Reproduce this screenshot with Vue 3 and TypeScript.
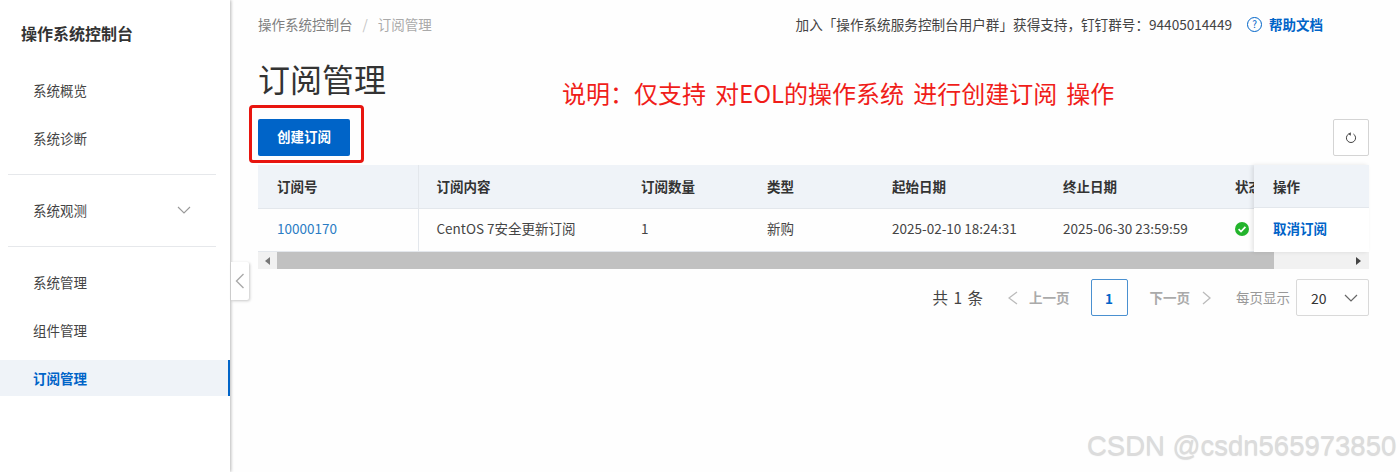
<template>
  <div class="page">
    <aside class="sidebar">
      <h1 class="console-title">操作系统控制台</h1>
      <template v-for="(group, i) in navGroups" :key="i">
        <div v-if="i > 0" class="nav-divider"></div>
        <nav class="nav-group">
          <a
            v-for="item in group"
            :key="item.label"
            class="nav-item"
            :class="{ active: item.label === activeNav }"
          >
            <span>{{ item.label }}</span>
            <svg v-if="item.expandable" class="nav-arrow" width="14" height="8" viewBox="0 0 14 8">
              <path d="M1 1l6 6 6-6" fill="none" stroke="#999" stroke-width="1.1" />
            </svg>
          </a>
        </nav>
      </template>
      <div class="collapse-handle">
        <svg width="10" height="16" viewBox="0 0 10 16">
          <path d="M8.5 1L1.5 8l7 7" fill="none" stroke="#aaa" stroke-width="1.4" />
        </svg>
      </div>
    </aside>

    <main class="content">
      <header class="topbar">
        <div class="breadcrumb">
          <span>操作系统控制台</span>
          <span class="sep">/</span>
          <span class="current">订阅管理</span>
        </div>
        <div class="notice">
          <span>加入「操作系统服务控制台用户群」获得支持，钉钉群号：94405014449</span>
          <a class="help">
            <i class="help-icon">?</i>
            <b>帮助文档</b>
          </a>
        </div>
      </header>

      <h2 class="page-title">订阅管理</h2>
      <div class="annotation">说明：仅支持 对EOL的操作系统 进行创建订阅 操作</div>

      <div class="toolbar">
        <div class="create-wrap">
          <button class="btn-primary">创建订阅</button>
          <div class="red-box"></div>
        </div>
        <button class="btn-refresh" aria-label="刷新">
          <svg width="12" height="12" viewBox="0 0 12 12">
            <path d="M3.6 2A4.6 4.6 0 1 0 8.4 2" fill="none" stroke="#444" stroke-width="1" />
            <path d="M5.8 0.2L3 2l2.8 1.8z" fill="#444" />
          </svg>
        </button>
      </div>

      <div class="table-wrap">
        <div class="table-scroll">
          <table class="grid">
            <colgroup>
              <col v-for="w in colWidths" :key="w.key" :style="{ width: w.width + 'px' }" />
            </colgroup>
            <thead>
              <tr>
                <th v-for="c in columns" :key="c">{{ c }}</th>
              </tr>
            </thead>
            <tbody>
              <tr v-for="row in rows" :key="row.id">
                <td><a class="link">{{ row.id }}</a></td>
                <td>{{ row.content }}</td>
                <td>{{ row.count }}</td>
                <td>{{ row.type }}</td>
                <td>{{ row.start }}</td>
                <td>{{ row.end }}</td>
                <td>
                  <span class="status">
                    <svg width="14" height="14" viewBox="0 0 14 14">
                      <circle cx="7" cy="7" r="7" fill="#23b42c" />
                      <path d="M3.6 7.2l2.4 2.3 4.4-4.6" fill="none" stroke="#fff" stroke-width="1.7" />
                    </svg>
                  </span>
                </td>
              </tr>
            </tbody>
          </table>
        </div>
        <div class="fixed-col">
          <div class="fixed-head">操作</div>
          <div class="fixed-cell"><a class="action">取消订阅</a></div>
        </div>
      </div>

      <div class="scrollbar">
        <span class="scroll-btn"><i class="tri-left"></i></span>
        <span class="scroll-thumb"></span>
        <span class="scroll-btn end"><i class="tri-right"></i></span>
      </div>

      <div class="pagination">
        <span class="total">共 1 条</span>
        <span class="pager prev">
          <svg width="10" height="14" viewBox="0 0 10 14">
            <path d="M9 1L1 7l8 6" fill="none" stroke="#bbb" stroke-width="1.3" />
          </svg>
          <b>上一页</b>
        </span>
        <span class="page-num">1</span>
        <span class="pager next">
          <b>下一页</b>
          <svg width="10" height="14" viewBox="0 0 10 14">
            <path d="M1 1l7 6-7 6" fill="none" stroke="#bbb" stroke-width="1.3" />
          </svg>
        </span>
        <span class="per-page">每页显示</span>
        <span class="select">
          <span>20</span>
          <svg width="14" height="8" viewBox="0 0 14 8">
            <path d="M1 1l6 6 6-6" fill="none" stroke="#666" stroke-width="1.2" />
          </svg>
        </span>
      </div>

      <div class="watermark">CSDN @csdn565973850</div>
    </main>
  </div>
</template>

<script setup lang="ts">
interface NavItem {
  label: string;
  expandable?: boolean;
}

const activeNav = '订阅管理';

const navGroups: NavItem[][] = [
  [{ label: '系统概览' }, { label: '系统诊断' }],
  [{ label: '系统观测', expandable: true }],
  [{ label: '系统管理' }, { label: '组件管理' }, { label: '订阅管理' }],
];

const columns = ['订阅号', '订阅内容', '订阅数量', '类型', '起始日期', '终止日期', '状态'];

const colWidths = [160, 205, 126, 125, 171, 172, 37].map((width, key) => ({ key, width }));

const rows = [
  {
    id: '10000170',
    content: 'CentOS 7安全更新订阅',
    count: 1,
    type: '新购',
    start: '2025-02-10 18:24:31',
    end: '2025-06-30 23:59:59',
  },
];
</script>

<style>
html,
body {
  margin: 0;
  background: #fff;
}
</style>

<style scoped>
.page {
  position: relative;
  display: flex;
  width: 1400px;
  height: 472px;
  overflow: hidden;
  background: #fefefe;
  color: #333;
  font-family: "Noto Sans CJK SC", "Liberation Sans", sans-serif;
  font-size: 13.5px;
}

.sidebar {
  position: relative;
  flex: none;
  width: 230px;
  box-sizing: border-box;
  background: #fff;
  box-shadow: 1px 0 3px rgba(0, 0, 0, 0.28);
}

.console-title {
  margin: 0;
  height: 72px;
  padding: 21px 0 0 21px;
  box-sizing: border-box;
  font-size: 16px;
  line-height: 24px;
  font-weight: 700;
}

.nav-group {
  display: flex;
  flex-direction: column;
  gap: 12px;
}

.nav-divider {
  height: 1px;
  margin: 18px 14px 17px 8px;
  background: #e6e8eb;
}

.nav-item {
  display: flex;
  align-items: center;
  justify-content: space-between;
  height: 36px;
  padding: 0 39px 0 33px;
  color: #444;
}

.nav-item.active {
  background: #eff3f8;
  color: #0064c8;
  font-weight: 700;
  box-shadow: inset -2px 0 0 #0064c8;
}

.collapse-handle {
  position: absolute;
  top: 262px;
  left: 231px;
  display: flex;
  align-items: center;
  justify-content: center;
  width: 18px;
  height: 38px;
  background: #fff;
  border-radius: 0 2px 2px 0;
  box-shadow: 1px 1px 3px rgba(0, 0, 0, 0.22);
}

.content {
  flex: 1;
  min-width: 0;
  padding: 0 31px 0 28px;
}

.topbar {
  display: flex;
  align-items: center;
  justify-content: space-between;
  height: 48px;
  padding-right: 15px;
  box-sizing: border-box;
  width: 1080px;
  font-size: 13.5px;
}

.breadcrumb {
  display: flex;
  align-items: center;
  color: #808080;
}

.breadcrumb .sep {
  margin: 0 10px;
  color: #c4c4c4;
}

.breadcrumb .current {
  color: #aaa;
}

.notice {
  display: flex;
  align-items: center;
  color: #444;
  font-size: 13.6px;
}

.help {
  display: flex;
  align-items: center;
  margin-left: 15px;
  color: #0064c8;
  font-size: 13.5px;
}

.help-icon {
  display: flex;
  align-items: center;
  justify-content: center;
  width: 13px;
  height: 13px;
  margin-right: 7px;
  border: 1px solid #0064c8;
  border-radius: 50%;
  font-style: normal;
  font-size: 10px;
  line-height: 1;
}

.page-title {
  margin: 6px 0 17px;
  height: 48px;
  font-size: 32px;
  line-height: 48px;
  font-weight: 400;
}

.annotation {
  position: absolute;
  top: 75px;
  left: 562px;
  color: #f01d1a;
  font-size: 24px;
  line-height: 36px;
  word-spacing: 3.7px;
  white-space: nowrap;
}

.toolbar {
  display: flex;
  align-items: center;
  justify-content: space-between;
  margin-bottom: 9px;
}

.create-wrap {
  position: relative;
}

.btn-primary {
  display: block;
  width: 92px;
  height: 37px;
  padding: 0 0 4px;
  border: none;
  border-radius: 2px;
  background: #0064c8;
  color: #fff;
  font: 700 13.5px "Noto Sans CJK SC", sans-serif;
}

.red-box {
  position: absolute;
  top: -14px;
  left: -9px;
  width: 109px;
  height: 52px;
  border: 3px solid #e8150f;
  border-radius: 4px;
}

.btn-refresh {
  display: flex;
  align-items: center;
  justify-content: center;
  width: 36px;
  height: 37px;
  padding: 0;
  border: 1px solid #d4d4d4;
  border-radius: 2px;
  background: #fff;
}

.table-wrap {
  display: flex;
  height: 87px;
}

.table-scroll {
  flex: 1;
  min-width: 0;
  overflow: hidden;
}

.grid {
  width: 996px;
  table-layout: fixed;
  border-collapse: collapse;
}

.grid th {
  height: 43px;
  padding: 0 0 0 18px;
  box-sizing: border-box;
  background: #eff3f8;
  border-bottom: 1px solid #e3e7ec;
  font-size: 13.5px;
  font-weight: 700;
  text-align: left;
  white-space: nowrap;
  overflow: hidden;
}

.grid td {
  height: 43px;
  padding: 0 0 4px 18px;
  box-sizing: border-box;
  color: #444;
  white-space: nowrap;
  border-bottom: 1px solid #e3e7ec;
}

.grid th:first-child,
.grid td:first-child {
  padding-left: 19px;
  border-right: 1px solid #e3e7ec;
}

.link {
  color: #2a7cc4;
}

.status {
  display: flex;
  align-items: center;
  padding-top: 3px;
}

.fixed-col {
  position: relative;
  flex: none;
  width: 115px;
  background: #fff;
  box-shadow: -2px 0 4px rgba(0, 0, 0, 0.1);
}

.fixed-head {
  display: flex;
  align-items: center;
  height: 43px;
  padding: 0 0 0 19px;
  box-sizing: border-box;
  background: #eff3f8;
  border-bottom: 1px solid #e3e7ec;
  font-weight: 700;
}

.fixed-cell {
  display: flex;
  align-items: center;
  height: 44px;
  padding: 0 0 4px 19px;
  box-sizing: border-box;
}

.action {
  color: #0064c8;
  font-weight: 700;
}

.scrollbar {
  display: flex;
  height: 17px;
  background: #f1f1f1;
}

.scroll-btn {
  display: flex;
  align-items: center;
  justify-content: center;
  flex: none;
  width: 19px;
}

.scroll-btn.end {
  flex: 1;
  justify-content: flex-end;
  padding-right: 8px;
}

.scroll-thumb {
  flex: none;
  width: 997px;
  background: #c1c1c1;
}

.tri-left,
.tri-right {
  width: 0;
  height: 0;
  border-top: 4px solid transparent;
  border-bottom: 4px solid transparent;
}

.tri-left {
  border-right: 5px solid #777;
}

.tri-right {
  border-left: 5px solid #444;
}

.pagination {
  display: flex;
  align-items: center;
  justify-content: flex-end;
  height: 37px;
  margin-top: 10px;
}

.total {
  margin-right: 25px;
  padding-bottom: 2px;
  color: #444;
  font-size: 15.5px;
  word-spacing: 2px;
}

.pager {
  display: flex;
  align-items: center;
  gap: 11px;
  color: #aaa;
}

.pager.next {
  gap: 12px;
}

.pager b {
  padding-bottom: 2px;
  font-weight: 700;
}

.page-num {
  display: flex;
  align-items: center;
  justify-content: center;
  width: 37px;
  height: 37px;
  margin: 0 22px 0 21px;
  box-sizing: border-box;
  border: 1px solid #4a90d0;
  border-radius: 2px;
  color: #0064c8;
  font-weight: 700;
}

.per-page {
  margin: 0 6px 0 24px;
  padding-bottom: 2px;
  color: #999;
}

.select {
  display: flex;
  align-items: center;
  justify-content: space-between;
  width: 73px;
  height: 37px;
  padding: 0 10px 0 14px;
  box-sizing: border-box;
  border: 1px solid #d9d9d9;
  border-radius: 2px;
  font-size: 14px;
}

.watermark {
  position: absolute;
  top: 429px;
  left: 1087px;
  color: #dcdcdc;
  font-family: "Liberation Sans", sans-serif;
  font-size: 27.5px;
  line-height: 34px;
  white-space: nowrap;
  text-shadow: 0 1px 1px rgba(0, 0, 0, 0.15);
}
</style>
